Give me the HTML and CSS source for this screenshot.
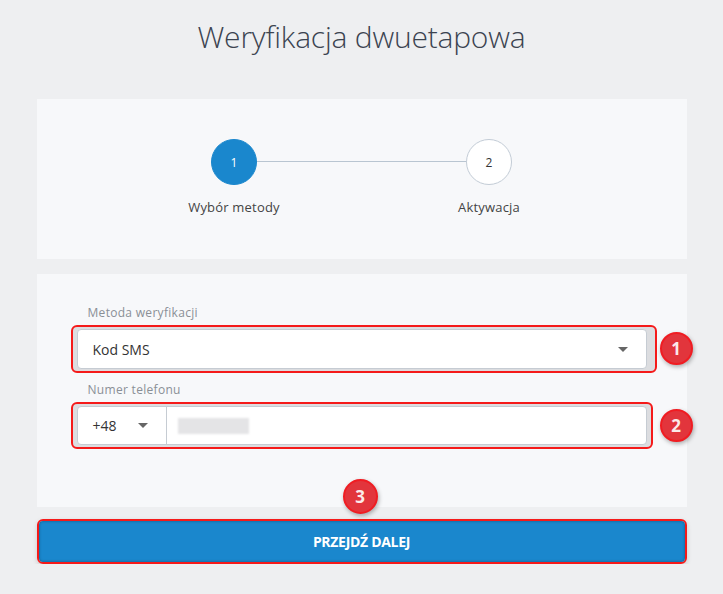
FILE: index.html
```html
<!DOCTYPE html>
<html lang="pl">
<head>
    <meta charset="UTF-8">
    <title>Weryfikacja dwuetapowa</title>
    <link rel="stylesheet" href="styles.css">
</head>
<body>
    <div id="page">
        <h1 class="title">Weryfikacja dwuetapowa</h1>

        <div class="panel steps-panel">
            <div class="steps">
                <div class="step active">
                    <span class="dot">1</span>
                    <span class="step-name">Wybór metody</span>
                </div>
                <div class="step">
                    <span class="dot">2</span>
                    <span class="step-name">Aktywacja</span>
                </div>
            </div>
        </div>

        <div class="panel form-panel">
            <label class="field-label">Metoda weryfikacji</label>
            <div class="mark mark-select">
                <div class="field select">
                    <span>Kod SMS</span>
                    <span class="caret"></span>
                </div>
                <span class="badge">1</span>
            </div>

            <label class="field-label">Numer telefonu</label>
            <div class="mark mark-phone">
                <div class="field phone">
                    <div class="prefix">
                        <span>+48</span>
                        <span class="caret"></span>
                    </div>
                    <div class="number"><span class="blur"></span></div>
                </div>
                <span class="badge badge-phone">2</span>
            </div>
            <span class="badge badge-btn">3</span>
        </div>

        <div class="mark-btn">
            <button class="btn">PRZEJDŹ DALEJ</button>
        </div>
    </div>
</body>
</html>
```

FILE: styles.css
```css
*{
    margin: 0;
    padding: 0;
    box-sizing: border-box;
}
body{
    background: #eeeff1;
    font-family: "Open Sans", "Noto Sans", sans-serif;
    color: #333;
}
#page{
    width: 650px;
    margin: 0 auto;
}
.title{
    height: 99px;
    padding-top: 16px;
    text-align: center;
    font-size: 30px;
    font-weight: 300;
    color: #3b4350;
    letter-spacing: -0.2px;
}
.panel{
    background: #f7f8fa;
}
.steps-panel{
    height: 160px;
    padding-top: 40px;
}
.steps{
    position: relative;
    width: 510px;
    margin: 0 auto;
    display: grid;
    grid-template-columns: 1fr 1fr;
}
.steps:before{
    content: "";
    position: absolute;
    left: 25%;
    right: 25%;
    top: 22px;
    height: 1px;
    background: #b9c5d1;
}
.step{
    display: flex;
    flex-direction: column;
    align-items: center;
    gap: 13px;
}
.dot{
    position: relative;
    width: 46px;
    height: 46px;
    border-radius: 50%;
    background: #fff;
    border: 1px solid #c3ccd6;
    display: flex;
    align-items: center;
    justify-content: center;
    font-size: 12px;
    color: #333;
}
.step.active .dot{
    background: #1a87cd;
    border-color: #1a87cd;
    color: #fff;
}
.step-name{
    font-size: 13px;
    color: #444;
    line-height: 18px;
    letter-spacing: 0.2px;
}
.form-panel{
    position: relative;
    margin-top: 15px;
    height: 233px;
    padding: 31px 40px 0;
}
.field-label{
    display: block;
    font-size: 12px;
    line-height: 16px;
    color: #8a8f96;
    letter-spacing: 0.3px;
    padding-left: 11px;
    margin-bottom: 8px;
}
.mark{
    position: relative;
    margin: -4px -6px 0;
    padding: 2px 4px;
    border: 2px solid #f51a1a;
    border-radius: 6px;
    background: #dcdde0;
}
.mark-select{
    margin-right: -10px;
    padding-right: 8px;
    margin-bottom: 9px;
}
.mark-phone{
    margin-right: -6px;
}
.field{
    height: 40px;
    background: #fff;
    border: 1px solid #c6ccd3;
    border-radius: 4px;
    display: flex;
    align-items: center;
    font-size: 14px;
    color: #333;
}
.select{
    justify-content: space-between;
    padding: 0 18px 0 15px;
}
.caret{
    width: 0;
    height: 0;
    border-left: 5px solid transparent;
    border-right: 5px solid transparent;
    border-top: 5px solid #666;
}
.phone{
    height: 39px;
}
.prefix{
    width: 89px;
    height: 100%;
    display: flex;
    align-items: center;
    justify-content: space-between;
    padding: 0 18px 0 15px;
    border-right: 1px solid #c6ccd3;
}
.number{
    flex: 1;
    padding-left: 11px;
}
.blur{
    display: block;
    width: 71px;
    height: 16px;
    background: #e4e4e6;
    filter: blur(1px);
}
.badge{
    position: absolute;
    right: -38px;
    top: 50%;
    margin-top: -17px;
    width: 33px;
    height: 33px;
    border-radius: 50%;
    background: #e2353c;
    border: 2px solid #f01c22;
    box-shadow: 1px 2px 4px rgba(0,0,0,0.3);
    color: #fbeaea;
    font-size: 17px;
    font-weight: 700;
    display: flex;
    align-items: center;
    justify-content: center;
}
.badge-phone{
    right: -42px;
}
.badge-btn{
    right: auto;
    top: auto;
    left: 306px;
    bottom: -7px;
    margin: 0;
    width: 35px;
    height: 35px;
}
.mark-btn{
    margin-top: 12px;
    border: 2px solid #f51a1a;
    border-radius: 6px;
    box-shadow: 0 2px 5px rgba(0,0,0,0.15);
}
.btn{
    display: block;
    width: 100%;
    height: 41px;
    border: 0;
    border-radius: 4px;
    background: #1a87cd;
    box-shadow: inset 0 0 3px rgba(0,0,0,0.35);
    color: #fff;
    font-family: "Open Sans", "Noto Sans", sans-serif;
    font-size: 14px;
    font-weight: 700;
    letter-spacing: -0.3px;
}
```
